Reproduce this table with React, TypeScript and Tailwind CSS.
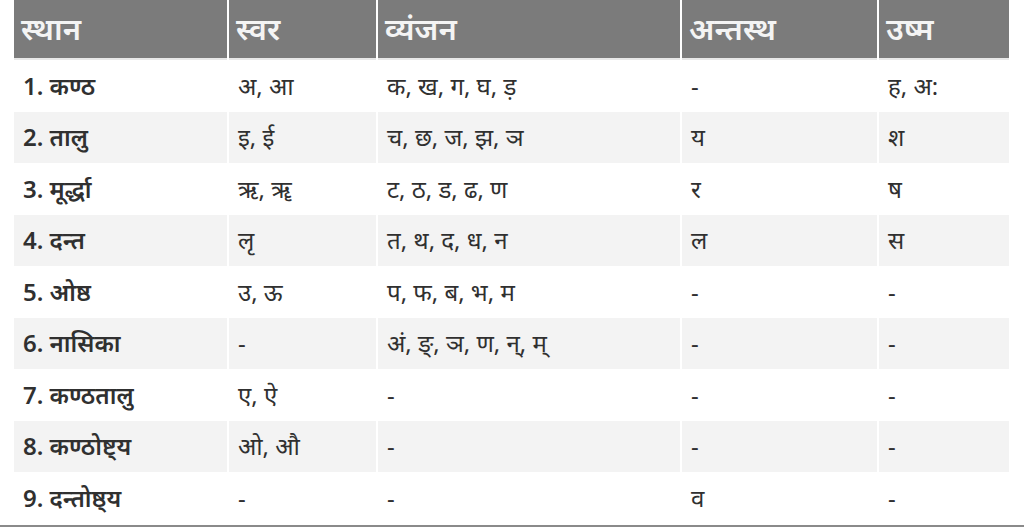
import React from "react";

const header = ["स्थान", "स्वर", "व्यंजन", "अन्तस्थ", "उष्म"];
const rows: string[][] = [
  ["1. कण्ठ", "अ, आ", "क, ख, ग, घ, ड़", "-", "ह, अ:"],
  ["2. तालु", "इ, ई", "च, छ, ज, झ, ञ", "य", "श"],
  ["3. मूर्द्धा", "ऋ, ॠ", "ट, ठ, ड, ढ, ण", "र", "ष"],
  ["4. दन्त", "लृ", "त, थ, द, ध, न", "ल", "स"],
  ["5. ओष्ठ", "उ, ऊ", "प, फ, ब, भ, म", "-", "-"],
  ["6. नासिका", "-", "अं, ङ्, ञ, ण, न्, म्", "-", "-"],
  ["7. कण्ठतालु", "ए, ऐ", "-", "-", "-"],
  ["8. कण्ठोष्ट्य", "ओ, औ", "-", "-", "-"],
  ["9. दन्तोष्ठ्य", "-", "-", "व", "-"],
];

export default function App() {
  return (
    <div
      className="w-[1024px] h-[527px] bg-white overflow-hidden flex flex-col"
      style={{ fontFamily: '"Noto Sans", "Noto Sans Devanagari", Roboto, sans-serif' }}
    >
      <div className="flex-1 pl-[14px]">
        <div className="grid grid-cols-[213px_147px_302px_195px_130px] gap-x-[2px]">
          {header.map((h, i) => (
            <div
              key={"h" + i}
              className="h-[60px] bg-[#7b7b7b] text-[#f4f4f4] text-[31px] font-semibold flex items-center pl-[7px] pb-[2px] border-b-[2px] border-[#e8e8e8]"
            >
              {h}
            </div>
          ))}
          {rows.map((r, ri) =>
            r.map((c, ci) => (
              <div
                key={ri + "-" + ci}
                className={
                  "h-[51.5px] flex items-center pl-[9px] text-[24px] text-[#303030] " +
                  (ri % 2 === 1 ? "bg-[#f3f3f3] " : "bg-white ") +
                  (ci === 0 ? "font-semibold" : "font-normal")
                }
              >
                {c}
              </div>
            ))
          )}
        </div>
      </div>
      <div className="h-[2px] bg-[#8a8a8a] w-full"></div>
    </div>
  );
}
